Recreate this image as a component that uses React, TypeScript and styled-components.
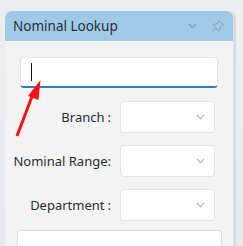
import styled, { createGlobalStyle } from "styled-components";

const GlobalStyle = createGlobalStyle`
  html, body {
    margin: 0;
    padding: 0;
    background: #e7e9ec;
    font-family: "Noto Sans", "Open Sans", sans-serif;
  }
`;

const Page = styled.div`
  width: 243px;
  height: 246px;
  overflow: hidden;
  padding: 11px 0 0 5px;
  box-sizing: border-box;
  background: linear-gradient(#eceef0, #e7e9ec);
`;

const Panel = styled.div`
  position: relative;
  width: 228px;
  height: 240px;
  background: #f3f3f3;
  border-radius: 7px 7px 0 0;
  box-shadow: 1px 0 0 #e0e2e5, 3px 0 0 #d6d9dd;
  overflow: hidden;
`;

const Header = styled.div`
  height: 30px;
  display: flex;
  align-items: center;
  padding: 0 5px 0 8px;
  background: #9fcae7;
  color: #2a2f36;
  font-size: 13.5px;
`;

const Title = styled.div`
  flex: 1;
`;

const HeaderIcon = styled.div<{ $gap: number }>`
  display: flex;
  align-items: center;
  justify-content: center;
  width: 20px;
  margin-left: ${(p) => p.$gap}px;
  color: #7d99ad;
`;

const Body = styled.div`
  display: flex;
  flex-direction: column;
  padding: 16px 15px 0 12px;
`;

const SearchInput = styled.div`
  height: 28px;
  margin-left: 3px;
  background: #fff;
  border: 1px solid #e2e4e7;
  border-bottom: 2px solid #2b7fc6;
  border-radius: 4px;
  display: flex;
  align-items: center;
  padding-left: 10px;
`;

const Caret = styled.div`
  width: 1px;
  height: 18px;
  background: #111;
`;

const Rows = styled.div`
  display: flex;
  flex-direction: column;
  gap: 12px;
  margin-top: 13px;
`;

const Row = styled.div`
  display: flex;
  align-items: center;
`;

const Label = styled.div`
  width: 94px;
  display: flex;
  justify-content: flex-end;
  font-size: 13px;
  color: #2b2b33;
  white-space: nowrap;
`;

const Colon = styled.span<{ $space: number }>`
  margin-left: ${(p) => p.$space}px;
`;

const Select = styled.div`
  margin-left: 9px;
  width: 95px;
  height: 32px;
  box-sizing: border-box;
  background: #fff;
  border: 1px solid #e3e4e7;
  border-radius: 4px;
  display: flex;
  align-items: center;
  justify-content: flex-end;
  padding-right: 9px;
  color: #aab0b6;
`;

const Footer = styled.div`
  margin: 9px -4px 0 0;
  height: 20px;
  background: #fff;
  border: 1px solid #dcdfe4;
  border-bottom: none;
  border-radius: 4px 4px 0 0;
`;

const Arrow = styled.svg`
  position: absolute;
  left: 0;
  top: 0;
  pointer-events: none;
`;

function Chevron({ size = 9 }: { size?: number }) {
  return (
    <svg width={size} height={size / 2 + 1} viewBox="0 0 10 6" fill="none">
      <path d="M1 1L5 5L9 1" stroke="currentColor" strokeWidth="1.3" />
    </svg>
  );
}

function Pin() {
  return (
    <svg width="14" height="14" viewBox="0 0 16 16" fill="none">
      <path
        d="M9.5 1.8L14.2 6.5L12.6 7.2L10.3 9.5L10.1 12.4L8.9 13.6L2.4 7.1L3.6 5.9L6.5 5.7L8.8 3.4L9.5 1.8Z"
        stroke="currentColor"
        strokeWidth="1"
        strokeLinejoin="round"
      />
      <path d="M5.6 10.4L1.8 14.2" stroke="currentColor" strokeWidth="1" />
    </svg>
  );
}

const fields = [
  { label: "Branch", space: 3 },
  { label: "Nominal Range", space: 0 },
  { label: "Department", space: 3 },
];

export default function App() {
  return (
    <>
      <GlobalStyle />
      <Page>
        <Panel>
          <Header>
            <Title>Nominal Lookup</Title>
            <HeaderIcon $gap={0}>
              <Chevron size={9} />
            </HeaderIcon>
            <HeaderIcon $gap={6}>
              <Pin />
            </HeaderIcon>
          </Header>
          <Body>
            <SearchInput>
              <Caret />
            </SearchInput>
            <Rows>
              {fields.map((f) => (
                <Row key={f.label}>
                  <Label>
                    {f.label}
                    <Colon $space={f.space}>:</Colon>
                  </Label>
                  <Select>
                    <Chevron size={9} />
                  </Select>
                </Row>
              ))}
            </Rows>
            <Footer />
          </Body>
          <Arrow width="228" height="240" viewBox="0 0 228 240">
            <path d="M12 125L29.5 79" stroke="#ff1010" strokeWidth="3" />
            <path d="M35.5 69L23 85L33.5 89Z" fill="#ff1010" />
          </Arrow>
        </Panel>
      </Page>
    </>
  );
}
